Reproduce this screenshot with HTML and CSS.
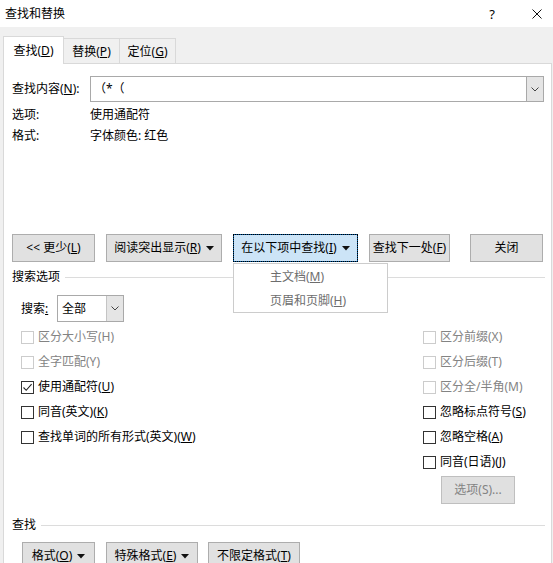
FILE: index.html
```html
<!DOCTYPE html>
<html lang="zh-CN">
<head>
<meta charset="utf-8">
<title>查找和替换</title>
<link rel="stylesheet" href="styles.css">
</head>
<body>
<div class="titlebar">
  <span class="title">查找和替换</span>
  <span class="help">?</span>
  <span class="close"><svg width="10" height="10" viewBox="0 0 10 10"><path d="M0.5 0.5 L9.5 9.5 M9.5 0.5 L0.5 9.5" stroke="#111" stroke-width="1" fill="none"/></svg></span>
</div>
<div class="dialog">
  <div class="tabs">
    <div class="tab active"><span>查找(<u>D</u>)</span></div>
    <div class="tab t2"><span>替换(<u>P</u>)</span></div>
    <div class="tab t3"><span>定位(<u>G</u>)</span></div>
  </div>
  <div class="panel">
    <div class="find-row">
      <span class="find-label">查找内容(<u>N</u>):</span>
      <div class="combo">
        <span class="combo-text">（*（</span>
        <span class="combo-btn"><svg width="8" height="5" viewBox="0 0 8 5"><path d="M0.5 0.5 L4 4 L7.5 0.5" stroke="#444" stroke-width="1" fill="none"/></svg></span>
      </div>
    </div>
    <div class="info-row first"><span class="info-label">选项:</span><span>使用通配符</span></div>
    <div class="info-row"><span class="info-label">格式:</span><span>字体颜色: 红色</span></div>

    <div class="btn-row top">
      <div class="btn w-less"><span>&lt;&lt; 更少(<u>L</u>)</span></div>
      <div class="btn w-read"><span>阅读突出显示(<u>R</u>)</span><svg class="tri" width="8" height="5" viewBox="0 0 8 5"><path d="M0 0 H8 L4 4.5 Z" fill="#111"/></svg></div>
      <div class="menu-wrap">
        <div class="btn w-in focus"><span>在以下项中查找(<u>I</u>)</span><svg class="tri" width="8" height="5" viewBox="0 0 8 5"><path d="M0 0 H8 L4 4.5 Z" fill="#111"/></svg></div>
        <div class="menu">
          <div class="menu-item"><span>主文档(<u>M</u>)</span></div>
          <div class="menu-item"><span>页眉和页脚(<u>H</u>)</span></div>
        </div>
      </div>
      <div class="btn w-next"><span>查找下一处(<u>F</u>)</span></div>
      <div class="btn w-close"><span>关闭</span></div>
    </div>

    <div class="section s1"><span>搜索选项</span><span class="rule"></span></div>

    <div class="search-row">
      <span class="search-label">搜索<u>:</u></span>
      <div class="select">
        <span class="select-text">全部</span>
        <span class="select-btn"><svg width="8" height="5" viewBox="0 0 8 5"><path d="M0.5 0.5 L4 4 L7.5 0.5" stroke="#444" stroke-width="1" fill="none"/></svg></span>
      </div>
    </div>

    <div class="options">
      <div class="col col-left">
        <div class="chk disabled"><span class="box"></span><span>区分大小写(H)</span></div>
        <div class="chk disabled"><span class="box"></span><span>全字匹配(Y)</span></div>
        <div class="chk"><span class="box"><svg width="11" height="11" viewBox="0 0 11 11"><path d="M1.5 5.5 L4.2 8.3 L9.6 2.2" stroke="#222" stroke-width="1.1" fill="none"/></svg></span><span>使用通配符(<u>U</u>)</span></div>
        <div class="chk"><span class="box"></span><span>同音(英文)(<u>K</u>)</span></div>
        <div class="chk"><span class="box"></span><span>查找单词的所有形式(英文)(<u>W</u>)</span></div>
      </div>
      <div class="col col-right">
        <div class="chk disabled"><span class="box"></span><span>区分前缀(X)</span></div>
        <div class="chk disabled"><span class="box"></span><span>区分后缀(T)</span></div>
        <div class="chk disabled"><span class="box"></span><span>区分全/半角(M)</span></div>
        <div class="chk"><span class="box"></span><span>忽略标点符号(<u>S</u>)</span></div>
        <div class="chk"><span class="box"></span><span>忽略空格(<u>A</u>)</span></div>
        <div class="chk"><span class="box"></span><span>同音(日语)(<u>J</u>)</span></div>
        <div class="btn disabled-btn w-opt"><span>选项(S)...</span></div>
      </div>
    </div>

    <div class="section s2"><span>查找</span><span class="rule"></span></div>

    <div class="btn-row bottom">
      <div class="btn w-fmt"><span>格式(<u>O</u>)</span><svg class="tri" width="8" height="5" viewBox="0 0 8 5"><path d="M0 0 H8 L4 4.5 Z" fill="#111"/></svg></div>
      <div class="btn w-spec"><span>特殊格式(<u>E</u>)</span><svg class="tri" width="8" height="5" viewBox="0 0 8 5"><path d="M0 0 H8 L4 4.5 Z" fill="#111"/></svg></div>
      <div class="btn w-nofmt"><span>不限定格式(<u>T</u>)</span></div>
    </div>
  </div>
</div>
</body>
</html>
```

FILE: styles.css
```css
* { box-sizing: border-box; }
html, body { margin: 0; padding: 0; }
body {
  width: 553px;
  height: 563px;
  overflow: hidden;
  background: #f0f0f0;
  color: #000;
  font-family: "Noto Sans", "Noto Sans CJK SC", sans-serif;
  font-size: 12px;
  line-height: 16px;
}
u { text-decoration: underline; text-underline-offset: 1px; }

.titlebar {
  height: 27px;
  background: #fff;
  display: flex;
  align-items: center;
  padding-left: 5px;
}
.help { margin-left: auto; font-size: 13px; }
.close { display: flex; margin: 0 11px 0 37px; }

.dialog { padding: 9px 1px 0 3px; }

.tabs {
  display: flex;
  align-items: flex-end;
  height: 27px;
}
.tab {
  height: 25px;
  display: flex;
  align-items: center;
  justify-content: center;
  padding-top: 2px;
  background: #f0f0f0;
  border: 1px solid #d9d9d9;
  border-bottom: none;
  border-left: none;
}
.tab.active {
  height: 28px;
  width: 61px;
  margin-bottom: -1px;
  background: #fff;
  border-left: 1px solid #d9d9d9;
  position: relative;
  z-index: 1;
  padding-top: 1px;
}
.tab.t2 { width: 56px; }
.tab.t3 { width: 56px; }

.panel {
  height: 520px;
  background: #fff;
  border: 1px solid #d9d9d9;
  border-bottom: none;
  padding: 12px 7px 0 8px;
}

.find-row { display: flex; align-items: center; height: 26px; }
.find-label { width: 78px; }
.combo {
  flex: 1;
  height: 26px;
  display: flex;
  border: 1px solid #a9a9a9;
}
.combo-text { flex: 1; padding-left: 3px; line-height: 24px; }
.combo-btn {
  width: 17px;
  background: #e5e5e5;
  border-left: 1px solid #a9a9a9;
  display: flex;
  align-items: center;
  justify-content: center;
}

.info-row { display: flex; height: 21px; align-items: center; }
.info-row.first { margin-top: 2px; }
.info-label { width: 78px; }

.btn-row { display: flex; gap: 11px; }
.btn-row.top { margin-top: 88px; }
.btn {
  height: 28px;
  display: flex;
  align-items: center;
  justify-content: center;
  gap: 5px;
  background: #e1e1e1;
  border: 1px solid #adadad;
  white-space: nowrap;
}
.tri { margin-top: 1px; }
.w-less { width: 83px; }
.w-read { width: 116px; }
.w-in { width: 125px; }
.w-next { width: 81px; }
.w-close { width: 73px; margin-left: 9px; }
.btn.focus {
  background: #cce4f7;
  border-color: #005499;
  outline: 1px dotted #000;
  outline-offset: -1px;
}

.menu-wrap { position: relative; }
.menu {
  position: absolute;
  left: 0;
  top: 29px;
  width: 155px;
  height: 50px;
  background: #fff;
  border: 1px solid #cccccc;
  padding-top: 1px;
  z-index: 2;
  color: #6d6d6d;
}
.menu-item { height: 24px; display: flex; align-items: center; padding-left: 36px; }

.section { display: flex; align-items: center; height: 18px; }
.section.s1 { margin-top: 6px; }
.section.s2 { margin-top: 12px; }
.rule { flex: 1; height: 1px; background: #dcdcdc; margin-left: 5px; margin-right: -1px; }

.search-row { display: flex; align-items: center; margin-top: 9px; padding-left: 9px; }
.search-label { width: 36px; }
.select {
  width: 67px;
  height: 27px;
  display: flex;
  border: 1px solid #a9a9a9;
}
.select-text { flex: 1; padding-left: 4px; line-height: 25px; }
.select-btn {
  width: 17px;
  background: #e5e5e5;
  border-left: 1px solid #c4c4c4;
  display: flex;
  align-items: center;
  justify-content: center;
}

.options { display: flex; margin-top: 2px; }
.col-left { flex: 1; padding-left: 9px; }
.col-right { width: 121px; }
.chk { height: 25px; display: flex; align-items: center; gap: 4px; white-space: nowrap; }
.box {
  width: 13px;
  height: 13px;
  border: 1px solid #333;
  background: #fff;
  display: flex;
  align-items: center;
  justify-content: center;
  flex: none;
  margin-top: 1px;
}
.chk.disabled { color: #838383; }
.chk.disabled .box { border-color: #cccccc; }
.w-opt { width: 74px; margin: 2px 0 0 18px; }
.disabled-btn { color: #838383; background: #e0e0e0; border-color: #bfbfbf; }

.btn-row.bottom { margin-top: 8px; padding-left: 10px; }
.w-fmt { width: 73px; }
.w-spec { width: 92px; }
.w-nofmt { width: 92px; margin-left: -1px; }
```
